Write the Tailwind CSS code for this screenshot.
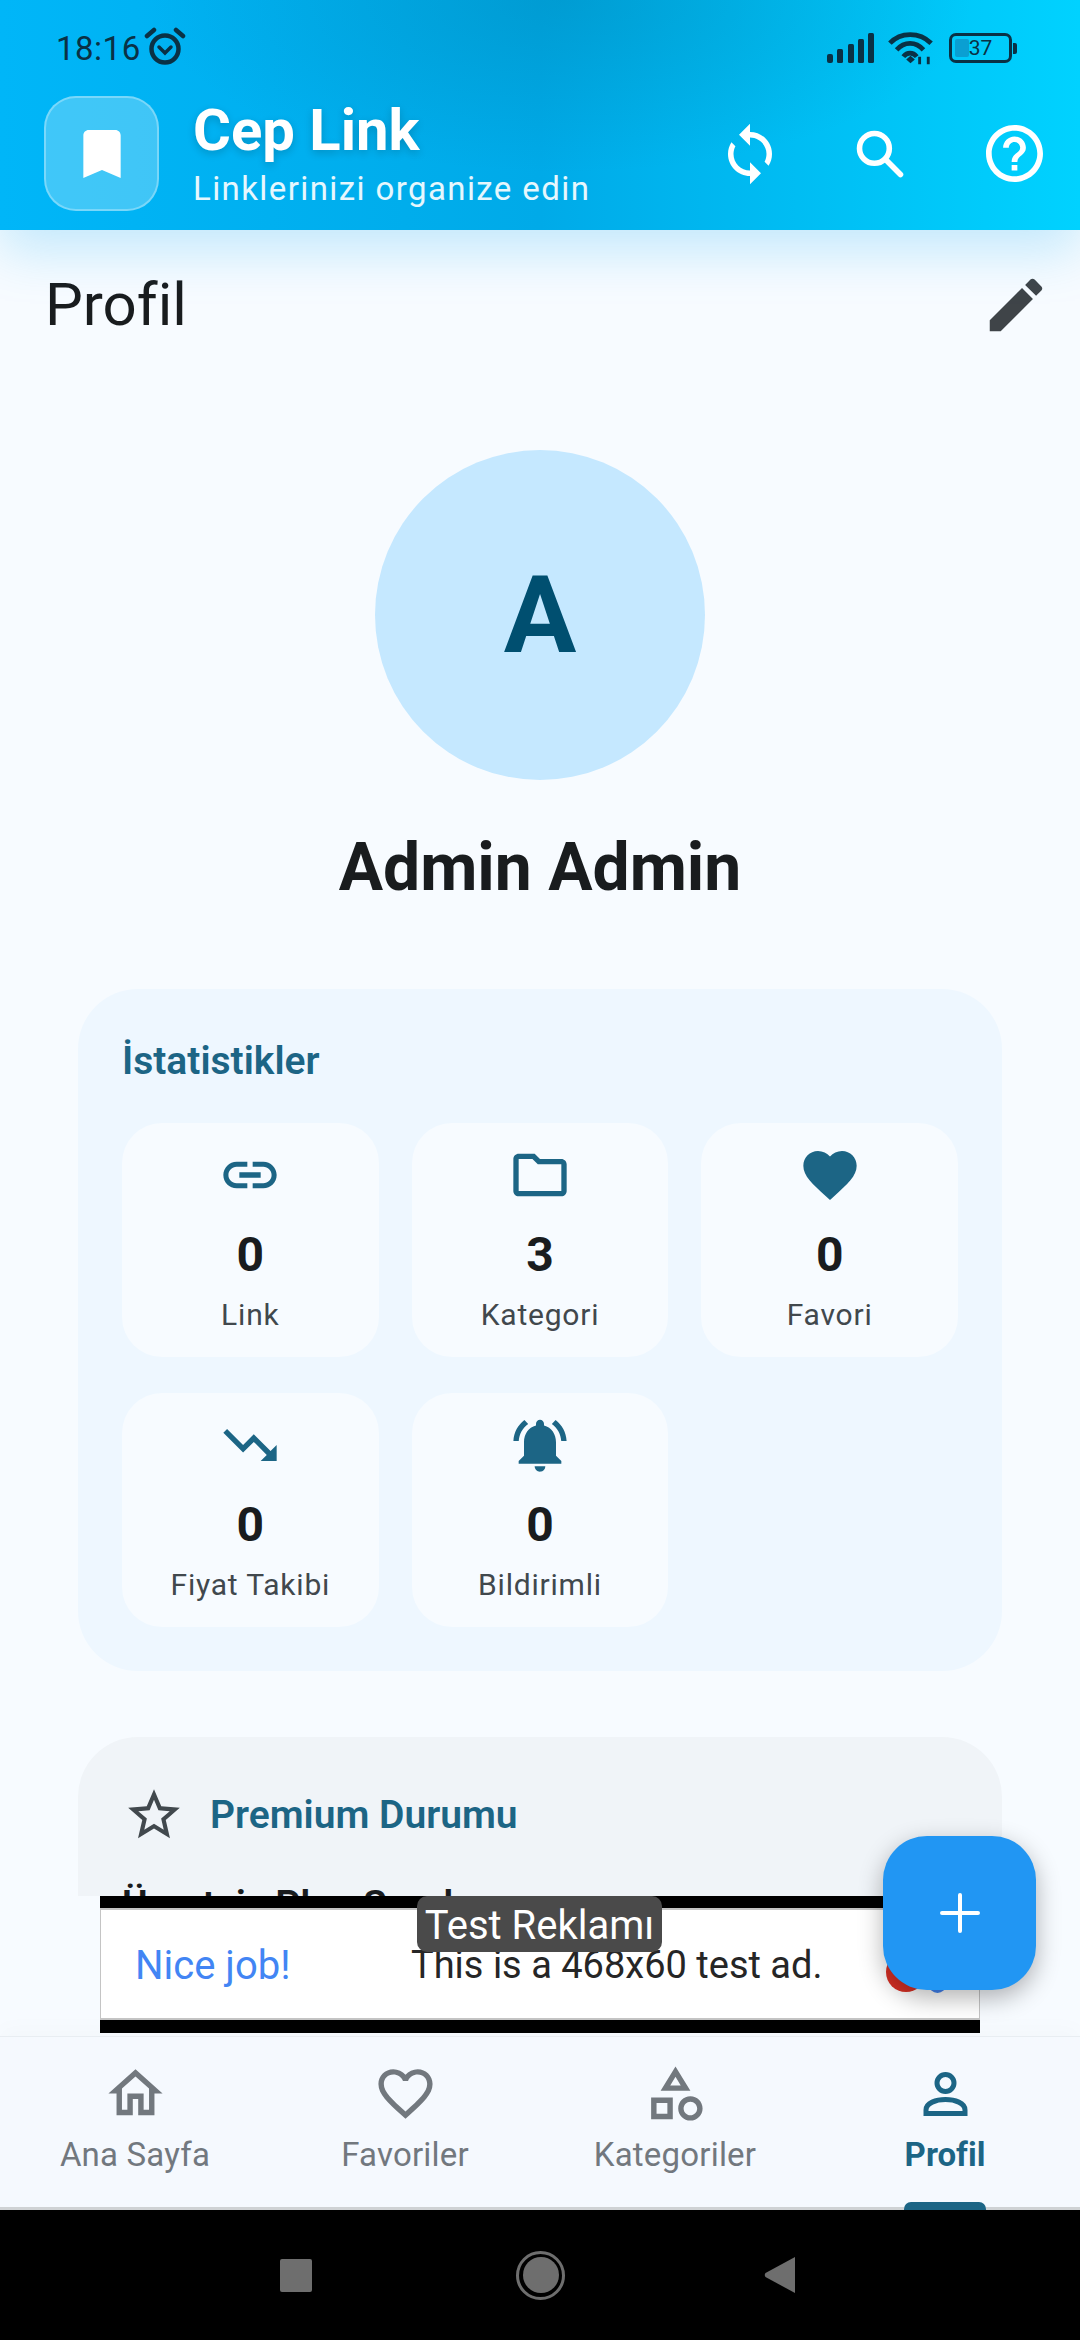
<!DOCTYPE html>
<html lang="tr">

<head>
    <meta charset="UTF-8">
    <meta name="viewport" content="width=device-width, initial-scale=1.0">
    <title>Cep Link</title>
    <script src="https://cdn.jsdelivr.net/npm/@tailwindcss/browser@4"></script>
</head>

<body class="bg-black font-['Roboto',sans-serif]">
    <div class="relative w-[1080px] h-[2340px] overflow-hidden flex flex-col bg-[#f7fbff]">

        <!-- App bar -->
        <header class="relative z-10 h-[230px] shrink-0 bg-[radial-gradient(ellipse_38%_75%_at_52%_0%,rgba(0,125,165,0.32),transparent),linear-gradient(to_right,#00b6f8,#00aae8_50%,#00d2ff)] shadow-[0_20px_50px_rgba(0,170,240,0.22)]">
            <div class="flex items-center justify-between h-[96px] pl-[56px] pr-[63px] text-[#0a3145]">
                <div class="flex items-center gap-[3px]">
                    <span class="text-[33px] leading-none tracking-[0.5px]">18:16</span>
                    <svg class="w-[42px] h-[42px] -mt-[2px]" viewBox="0 0 42 42" fill="none" stroke="currentColor" stroke-linecap="round">
                        <circle cx="21" cy="23" r="13.5" stroke-width="4.5" />
                        <path d="M3 10 L10 4 M39 10 L32 4" stroke-width="4.5" />
                        <path d="M15 21 L21 27 L27 21" stroke-width="3.5" />
                    </svg>
                </div>
                <div class="flex items-center">
                    <svg class="w-[48px] h-[32px]" viewBox="0 0 48 32" fill="currentColor">
                        <rect x="0" y="22" width="6" height="9" rx="2" />
                        <rect x="10" y="17" width="6" height="14" rx="1.5" />
                        <rect x="21" y="12" width="6" height="19" rx="1.5" />
                        <rect x="31" y="7" width="6" height="24" rx="1.5" />
                        <rect x="41" y="1" width="6" height="30" rx="1.5" />
                    </svg>
                    <svg class="ml-[13px] w-[46px] h-[36px]" viewBox="0 0 48 36" fill="none" stroke="currentColor" stroke-width="5">
                        <path d="M2 13 C13 1 33 1 45 13" />
                        <path d="M9 20 C17 11 29 11 37 20" />
                        <path d="M16 27 C20 22 26 22 30 27" />
                        <path d="M19 30 L23.500 26 L28 30 L23.500 34 Z" fill="currentColor" stroke="none" />
                        <path d="M33 35 V27 M42 35 V27" stroke-width="3" />
                    </svg>
                    <div class="ml-[15px] flex items-center">
                        <div class="relative w-[63px] h-[30px] rounded-[7px] border-[3.5px] border-current flex items-center justify-center">
                            <div class="absolute left-[3px] top-[3px] bottom-[3px] w-[14px] rounded-[2px] bg-[#0a9fd2]"></div>
                            <span class="relative text-[21px] leading-none">37</span>
                        </div>
                        <div class="w-[4px] h-[11px] ml-[1px] rounded-r-[2px] bg-current"></div>
                    </div>
                </div>
            </div>
            <div class="flex items-center pl-[44px] pr-[37px]">
                <div class="w-[115px] h-[115px] shrink-0 rounded-[32px] bg-white/25 border-[2px] border-white/30 flex items-center justify-center">
                    <svg class="w-[64px] h-[64px] text-white" viewBox="0 0 24 24" fill="currentColor">
                        <path d="M17 3H7c-1.100 0-1.990.900-1.990 2L5 21l7-3 7 3V5c0-1.100-.900-2-2-2z" />
                    </svg>
                </div>
                <div class="ml-[34px] flex-1 -mt-[2px]">
                    <div class="text-[58px] leading-[66px] font-bold text-white [text-shadow:0_3px_8px_rgba(0,0,0,0.18)]">Cep Link</div>
                    <div class="mt-[7px] text-[33px] leading-[38px] tracking-[1.4px] text-white/90">Linklerinizi organize edin</div>
                </div>
                <div class="flex items-center">
                    <svg class="w-[66px] h-[66px] text-white" viewBox="0 0 24 24" fill="currentColor">
                        <path d="M12 4V1L8 5l4 4V6c3.310 0 6 2.690 6 6 0 1.010-.250 1.970-.700 2.800l1.460 1.460C19.540 15.030 20 13.570 20 12c0-4.420-3.580-8-8-8zm0 14c-3.310 0-6-2.690-6-6 0-1.010.250-1.970.700-2.800L5.240 7.740C4.460 8.970 4 10.430 4 12c0 4.420 3.580 8 8 8v3l4-4-4-4v3z" />
                    </svg>
                    <svg class="ml-[70px] w-[54px] h-[54px] text-white" viewBox="0 0 58 58" fill="none" stroke="currentColor" stroke-width="6" stroke-linecap="round">
                        <circle cx="23" cy="23" r="16" />
                        <path d="M35 35 L51 51" />
                    </svg>
                    <svg class="ml-[79px] w-[57px] h-[57px] text-white" viewBox="2 2 20 20" fill="currentColor">
                        <path d="M11 18h2v-2h-2v2zm1-16C6.480 2 2 6.480 2 12s4.480 10 10 10 10-4.480 10-10S17.520 2 12 2zm0 18c-4.410 0-8-3.590-8-8s3.590-8 8-8 8 3.590 8 8-3.590 8-8 8zm0-14c-2.210 0-4 1.790-4 4h2c0-1.100.900-2 2-2s2 .900 2 2c0 2-3 1.750-3 5h2c0-2.250 3-2.500 3-5 0-2.210-1.790-4-4-4z" />
                    </svg>
                </div>
            </div>
        </header>

        <!-- Scrollable content, cut off by the ad strip -->
        <main class="flex-1 min-h-0 overflow-hidden">
            <div class="flex items-center justify-between h-[74px] mt-[38px] pl-[45px] pr-[29px]">
                <h1 class="text-[60px] leading-none font-normal text-[#191c1e]">Profil</h1>
                <svg class="w-[70px] h-[70px] text-[#3f4448]" viewBox="0 0 24 24" fill="currentColor">
                    <path d="M3 17.250V21h3.750L17.810 9.940l-3.750-3.750L3 17.250zM20.710 7.040c.390-.390.390-1.020 0-1.410l-2.340-2.340c-.390-.390-1.020-.390-1.410 0l-1.830 1.830 3.750 3.750 1.830-1.830z" />
                </svg>
            </div>

            <div class="mt-[108px] flex flex-col items-center">
                <div class="w-[330px] h-[330px] rounded-full bg-[#c5e8ff] flex items-center justify-center text-[108px] font-bold text-[#004f70]">A</div>
                <div class="mt-[50px] text-[66px] leading-[75px] font-bold text-[#191c1e]">Admin Admin</div>
            </div>

            <section class="mx-[78px] mt-[84px] h-[682px] rounded-[60px] bg-[#eef7ff] px-[44px] pt-[50px]">
                <h2 class="text-[39px] leading-[44px] font-semibold text-[#1c6585]">İstatistikler</h2>
                <div class="mt-[40px] grid grid-cols-3 gap-x-[33px] gap-y-[36px]">
                    <div class="h-[234px] rounded-[40px] bg-[#f7fbff] flex flex-col items-center pt-[20px]">
                        <svg class="w-[64px] h-[64px] text-[#1c6585]" viewBox="0 0 24 24" fill="currentColor">
                            <path d="M3.900 12c0-1.710 1.390-3.100 3.100-3.100h4V7H7c-2.760 0-5 2.240-5 5s2.240 5 5 5h4v-1.900H7c-1.710 0-3.100-1.390-3.100-3.100zM8 13h8v-2H8v2zm9-6h-4v1.900h4c1.710 0 3.100 1.390 3.100 3.100s-1.390 3.100-3.100 3.100h-4V17h4c2.760 0 5-2.240 5-5s-2.240-5-5-5z" />
                        </svg>
                        <div class="mt-[20px] text-[48px] leading-[56px] font-bold text-[#191c1e]">0</div>
                        <div class="mt-[14px] text-[30px] leading-[36px] tracking-[0.8px] text-[#41484d]">Link</div>
                    </div>
                    <div class="h-[234px] rounded-[40px] bg-[#f7fbff] flex flex-col items-center pt-[20px]">
                        <svg class="w-[64px] h-[64px] text-[#1c6585]" viewBox="0 0 24 24" fill="currentColor">
                            <path d="M9.170 6l2 2H20v10H4V6h5.170M10 4H4c-1.100 0-1.990.900-1.990 2L2 18c0 1.100.900 2 2 2h16c1.100 0 2-.900 2-2V8c0-1.100-.900-2-2-2h-8l-2-2z" />
                        </svg>
                        <div class="mt-[20px] text-[48px] leading-[56px] font-bold text-[#191c1e]">3</div>
                        <div class="mt-[14px] text-[30px] leading-[36px] tracking-[0.8px] text-[#41484d]">Kategori</div>
                    </div>
                    <div class="h-[234px] rounded-[40px] bg-[#f7fbff] flex flex-col items-center pt-[20px]">
                        <svg class="w-[64px] h-[64px] text-[#1c6585]" viewBox="0 0 24 24" fill="currentColor">
                            <path d="M12 21.350l-1.450-1.320C5.400 15.360 2 12.280 2 8.500 2 5.420 4.420 3 7.500 3c1.740 0 3.410.810 4.500 2.090C13.090 3.810 14.760 3 16.500 3 19.580 3 22 5.420 22 8.500c0 3.780-3.400 6.860-8.550 11.540L12 21.350z" />
                        </svg>
                        <div class="mt-[20px] text-[48px] leading-[56px] font-bold text-[#191c1e]">0</div>
                        <div class="mt-[14px] text-[30px] leading-[36px] tracking-[0.8px] text-[#41484d]">Favori</div>
                    </div>
                    <div class="h-[234px] rounded-[40px] bg-[#f7fbff] flex flex-col items-center pt-[20px]">
                        <svg class="w-[64px] h-[64px] text-[#1c6585]" viewBox="0 0 24 24" fill="currentColor">
                            <path d="M16 18l2.290-2.290-4.880-4.880-4 4L2 7.410 3.410 6l6 6 4-4 6.300 6.290L22 12v6z" />
                        </svg>
                        <div class="mt-[20px] text-[48px] leading-[56px] font-bold text-[#191c1e]">0</div>
                        <div class="mt-[14px] text-[30px] leading-[36px] tracking-[0.8px] text-[#41484d]">Fiyat Takibi</div>
                    </div>
                    <div class="h-[234px] rounded-[40px] bg-[#f7fbff] flex flex-col items-center pt-[20px]">
                        <svg class="w-[64px] h-[64px] text-[#1c6585]" viewBox="0 0 24 24" fill="currentColor">
                            <path d="M7.580 4.080L6.150 2.650C3.750 4.480 2.170 7.300 2.030 10.500h2c.150-2.650 1.510-4.970 3.550-6.420zm12.390 6.420h2c-.150-3.200-1.730-6.020-4.120-7.850l-1.420 1.430c2.020 1.450 3.390 3.770 3.540 6.420zM18 11c0-3.070-1.640-5.640-4.500-6.320V4c0-.830-.670-1.500-1.500-1.500s-1.500.670-1.500 1.500v.680C7.630 5.360 6 7.920 6 11v5l-2 2v1h16v-1l-2-2v-5zm-6 11c.140 0 .270-.010.400-.040.650-.140 1.180-.580 1.440-1.180.100-.240.150-.500.150-.780h-4c.010 1.100.900 2 2.010 2z" />
                        </svg>
                        <div class="mt-[20px] text-[48px] leading-[56px] font-bold text-[#191c1e]">0</div>
                        <div class="mt-[14px] text-[30px] leading-[36px] tracking-[0.8px] text-[#41484d]">Bildirimli</div>
                    </div>
                </div>
            </section>

            <section class="mx-[78px] mt-[66px] h-[400px] rounded-[60px] bg-[#f0f4f8] px-[44px] pt-[47px]">
                <div class="flex items-center gap-[25px] ml-[1px]">
                    <svg class="w-[62px] h-[62px] text-[#41484d]" viewBox="0 0 24 24" fill="currentColor">
                        <path d="M22 9.240l-7.190-.620L12 2 9.190 8.630 2 9.240l5.460 4.730L5.820 21 12 17.270 18.180 21l-1.630-7.030L22 9.240zM12 15.400l-3.760 2.270 1-4.280-3.320-2.880 4.380-.380L12 6.100l1.710 4.040 4.380.380-3.320 2.880 1 4.280L12 15.400z" />
                    </svg>
                    <h2 class="text-[39px] leading-[44px] font-semibold text-[#1c6585]">Premium Durumu</h2>
                </div>
                <div class="mt-[36px] text-[39px] leading-[46px] font-semibold text-[#191c1e]">Ücretsiz Plan Sınırlı</div>
            </section>
        </main>

        <!-- Ad strip -->
        <div class="relative h-[140px] shrink-0 bg-[#f7fbff] pl-[100px]">
            <div class="w-[880px] h-[137px] bg-black pt-[12px] pb-[13px]">
                <div class="h-full bg-white border-x border-y-2 border-[#c4c4c4] flex items-center pl-[34px] pt-[3px] text-[38px]">
                    <span class="w-[276px] text-[40px] text-[#4285f4]">Nice job!</span>
                    <span class="text-[#262626]">This is a 468x60 test ad.</span>
                </div>
            </div>
            <div class="absolute left-[417px] top-0 w-[245px] h-[56px] rounded-[10px] bg-[#4a4a4a] text-white text-[40px] leading-[60px] text-center">Test Reklamı</div>
            <div class="absolute left-[886px] top-[56px] w-[40px] h-[40px] rounded-full bg-[#d93025]"></div>
            <div class="absolute left-[929px] top-[80px] w-[17px] h-[17px] rounded-full bg-[#4285f4]"></div>
        </div>

        <!-- Bottom navigation -->
        <nav class="relative h-[174px] shrink-0 grid grid-cols-4 bg-[#f5f9fe] border-t border-[#e8edf2] border-b-[3px] border-b-[#cfd2d4] shadow-[0_-8px_20px_rgba(0,0,0,0.02)]">
            <div class="flex flex-col items-center pt-[24px] text-[#72787e]">
                <svg class="w-[65px] h-[65px]" viewBox="0 0 24 24" fill="currentColor">
                    <path d="M12 5.690l5 4.500V18h-2v-6H9v6H7v-7.810l5-4.500M12 3L2 12h3v8h6v-6h2v6h6v-8h3L12 3z" />
                </svg>
                <span class="mt-[10px] text-[33px] leading-[38px] tracking-[0.2px]">Ana Sayfa</span>
            </div>
            <div class="flex flex-col items-center pt-[24px] text-[#72787e]">
                <svg class="w-[65px] h-[65px]" viewBox="0 0 24 24" fill="currentColor">
                    <path d="M16.500 3c-1.740 0-3.410.810-4.500 2.090C10.910 3.810 9.240 3 7.500 3 4.420 3 2 5.420 2 8.500c0 3.780 3.400 6.860 8.550 11.540L12 21.350l1.450-1.320C18.600 15.360 22 12.280 22 8.500 22 5.420 19.580 3 16.500 3zm-4.400 15.550l-.100.100-.100-.100C7.140 14.240 4 11.390 4 8.500 4 6.500 5.500 5 7.500 5c1.540 0 3.040.990 3.570 2.360h1.870C13.460 5.990 14.960 5 16.500 5c2 0 3.500 1.500 3.500 3.500 0 2.890-3.140 5.740-7.900 10.050z" />
                </svg>
                <span class="mt-[10px] text-[33px] leading-[38px] tracking-[0.2px]">Favoriler</span>
            </div>
            <div class="flex flex-col items-center pt-[24px] text-[#72787e]">
                <svg class="w-[65px] h-[65px]" viewBox="0 0 24 24" fill="currentColor">
                    <path d="M12 2l-5.500 9h11L12 2zm0 3.840L13.930 9h-3.870L12 5.840zM17.500 13c-2.490 0-4.500 2.010-4.500 4.500s2.010 4.500 4.500 4.500 4.500-2.010 4.500-4.500-2.010-4.500-4.500-4.500zm0 7c-1.380 0-2.500-1.120-2.500-2.500s1.120-2.500 2.500-2.500 2.500 1.120 2.500 2.500-1.120 2.500-2.500 2.500zM3 21.500h8v-8H3v8zm2-6h4v4H5v-4z" />
                </svg>
                <span class="mt-[10px] text-[33px] leading-[38px] tracking-[0.2px]">Kategoriler</span>
            </div>
            <div class="relative flex flex-col items-center pt-[24px] text-[#1c6585]">
                <svg class="w-[65px] h-[65px]" viewBox="0 0 65 65" fill="none" stroke="currentColor" stroke-width="5">
                    <circle cx="32.500" cy="22" r="8.500" />
                    <path d="M13 52.500 V49 C13 42 23 38.500 32.500 38.500 S52 42 52 49 V52.500 Z" />
                </svg>
                <span class="mt-[10px] text-[33px] leading-[38px] font-bold">Profil</span>
                <div class="absolute -bottom-[3px] left-[94px] w-[82px] h-[8px] rounded-t-[7px] bg-[#1c6585]"></div>
            </div>
        </nav>

        <!-- System navigation -->
        <div class="h-[130px] shrink-0 bg-black flex items-center pl-[280px]">
            <div class="w-[32px] h-[33px] rounded-[2px] bg-[#6e6e6e]"></div>
            <div class="ml-[204px] w-[49px] h-[49px] rounded-full border-[3px] border-[#6e6e6e] flex items-center justify-center">
                <div class="w-[36px] h-[36px] rounded-full bg-[#6e6e6e]"></div>
            </div>
            <svg class="ml-[199px] w-[32px] h-[36px]" viewBox="0 0 32 36" fill="#6e6e6e">
                <path d="M31 0 V36 L1.500 20 Q0 18 1.500 16 Z" />
            </svg>
        </div>

        <!-- Floating action button -->
        <button class="absolute left-[883px] top-[1836px] w-[153px] h-[154px] rounded-[44px] bg-[#2196f3] flex items-center justify-center shadow-[0_8px_24px_rgba(0,0,0,0.3)]">
            <svg class="w-[40px] h-[40px]" viewBox="0 0 40 40" fill="none" stroke="white" stroke-width="4" stroke-linecap="round">
                <path d="M20 2 V38 M2 20 H38" />
            </svg>
        </button>
    </div>
</body>

</html>
